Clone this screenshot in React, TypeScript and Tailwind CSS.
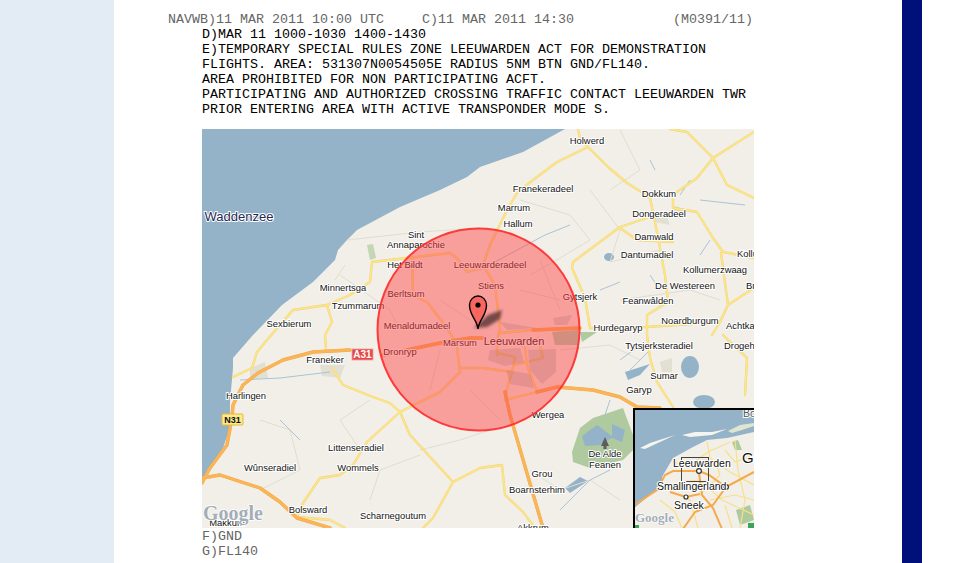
import React from "react";

const notamLines = [
  "D)MAR 11 1000-1030 1400-1430",
  "E)TEMPORARY SPECIAL RULES ZONE LEEUWARDEN ACT FOR DEMONSTRATION",
  "FLIGHTS. AREA: 531307N0054505E RADIUS 5NM BTN GND/FL140.",
  "AREA PROHIBITED FOR NON PARTICIPATING ACFT.",
  "PARTICIPATING AND AUTHORIZED CROSSING TRAFFIC CONTACT LEEUWARDEN TWR",
  "PRIOR ENTERING AREA WITH ACTIVE TRANSPONDER MODE S.",
];

const yellowRoads = [
  "M578 129L580 138L588 147L608 167L627 183L643 193L650 198L657 232L665 275L668 302L647 315L647 335L650 358L657 382L673 407",
  "M677 192L697 178L713 158L754 132",
  "M670 129L687 132L713 158L727 185L754 198",
  "M588 147L557 162L533 180L517 193L508 208L490 245L483 265L495 285L500 328L497 342L497 355",
  "M647 218L620 227L573 262L572 268L585 298L590 328",
  "M620 228L637 240L673 242",
  "M673 198L673 208L697 212L713 238L723 252L754 258",
  "M721 253L728 305L720 322L712 335",
  "M728 305L754 288",
  "M590 328L647 327L720 322",
  "M723 335L747 358L745 395",
  "M407 258L372 262L370 282L350 295L327 305L293 310L273 333L257 352L252 368L233 377",
  "M327 305L332 322L325 335L326 350",
  "M332 368L343 385L373 397L390 403L400 412L410 435L453 482L433 518L423 528",
  "M400 412L367 442L353 465L340 475L320 478L303 503L297 517",
  "M400 412L440 392L460 372L457 348",
  "M453 482L480 468L502 465L505 495L523 512L535 528",
  "M297 517L330 520L345 528",
  "M407 258L450 253L457 258L467 272L483 268",
  "M412 258L413 295L427 302L447 328L457 345",
  "M497 353L515 357L512 372L508 385L505 400",
  "M515 365L543 358L538 338",
  "M460 368L483 368L512 372",
  "M525 348L527 365L537 392L505 400",
  "M500 333L533 330",
];

const orangeRoads = [
  "M202 483L210 468L227 445L232 418L233 405L243 385L258 373L283 360L313 352L350 350",
  "M383 355L440 343L470 338L483 338",
  "M202 478L220 475L260 488L280 502L297 518L330 528",
  "M537 392L557 387L593 390L620 397L637 407L660 408",
  "M505 392L510 415L543 528",
  "M533 330L580 328",
];

const thinRoads = [
  "M347 240L420 232L480 228",
  "M345 265L335 280M340 275L390 310L400 330",
  "M590 190L620 230L610 262L660 250",
  "M520 200L570 215L590 240L560 258L530 275",
  "M260 420L290 430L300 470L260 490",
  "M370 400L340 420L360 450",
  "M420 450L460 440L490 430",
  "M370 500L380 470L420 455",
  "M530 470L560 490L590 480L620 500",
  "M560 350L610 345L640 360",
  "M620 300L690 290L720 300",
  "M610 190L640 170L620 130",
  "M440 300L470 320M520 290L560 300M540 260L560 310",
  "M470 390L500 420M440 350L430 390",
];

const rivers = [
  "M600 290L620 282M650 275L660 290",
  "M480 270L545 235L570 225",
  "M240 380L280 378L330 372",
  "M280 420L300 440",
  "M560 510L590 480L610 470",
  "M610 400L605 415",
  "M620 360L640 345",
  "M650 350L630 370",
  "M680 195L690 180M650 160L655 170",
  "M700 200L745 205M710 240L700 255",
];

type Label = [string, number, number];

const labels: Label[] = [
  ["Holwerd", 587, 144],
  ["Franekeradeel", 543, 192],
  ["Marrum", 514, 211],
  ["Hallum", 518, 227],
  ["Dokkum", 659, 197],
  ["Dongeradeel", 659, 217],
  ["Damwald", 654, 240],
  ["Dantumadiel", 647, 258],
  ["Kollumerzwaag", 715, 273],
  ["De Westereen", 685, 289],
  ["Feanwâlden", 648, 304],
  ["Noardburgum", 690, 324],
  ["Gytsjerk", 580, 300],
  ["Hurdegaryp", 618, 331],
  ["Sint", 416, 238],
  ["Annaparochie", 416, 248],
  ["Het Bildt", 405, 268],
  ["Leeuwarderadeel", 490, 268],
  ["Stiens", 491, 289],
  ["Minnertsga", 343, 291],
  ["Berltsum", 406, 297],
  ["Tzummarum", 358, 309],
  ["Sexbierum", 289, 327],
  ["Menaldumadeel", 417, 329],
  ["Marsum", 460, 346],
  ["Dronryp", 400, 355],
  ["Franeker", 325, 363],
  ["Harlingen", 246, 399],
  ["Littenseradiel", 356, 451],
  ["Wûnseradiel", 270, 471],
  ["Wommels", 358, 471],
  ["Bolsward", 308, 513],
  ["Scharnegoutum", 393, 519],
  ["Makkum", 227, 526],
  ["Tytsjerksteradiel", 659, 349],
  ["Sumar", 664, 379],
  ["Garyp", 639, 393],
  ["Wergea", 548, 418],
  ["De Alde", 605, 457],
  ["Feanen", 605, 468],
  ["Grou", 542, 477],
  ["Boarnsterhim", 537, 493],
  ["Akkrum", 533, 531],
];

function RoadSet({ paths, edge, fill, width }: { paths: string[]; edge: string; fill: string; width: number }) {
  return (
    <g fill="none" strokeLinejoin="round" strokeLinecap="round">
      {paths.map((d, i) => (
        <path key={"e" + i} d={d} stroke={edge} strokeWidth={width + 0.6} />
      ))}
      {paths.map((d, i) => (
        <path key={"f" + i} d={d} stroke={fill} strokeWidth={width} />
      ))}
    </g>
  );
}

function Overview() {
  return (
    <g>
      <rect x="633" y="408" width="121" height="120" fill="#94b3c9" />
      <path d="M634 508L650 495L662 485L662 477L673 458L693 447L707 440L727 438L754 432V528H634Z" fill="#f1efe8" />
      <path d="M682 435L695 432L712 432L727 429L712 435L690 437Z M640 448L650 443L675 435L660 442L645 449Z" fill="#f6f4ee" />
      <path d="M728 431L740 425L754 423V426L742 430L732 433Z" fill="#dfe6cf" />
      <path d="M732 442L738 440L742 450L735 450Z M736 510L750 505L754 520L740 525Z" fill="#aeca9e" />
      <g fill="none" stroke="#f8e08a" strokeWidth="1.2">
        <path d="M707 442L710 458L730 472L754 485M672 462L690 465L708 452L730 442M680 482L700 480L722 500L754 515M668 490L690 500L698 528M735 440L738 470L745 500L740 528M710 500L735 495L754 500M660 500L675 512L682 528M715 460L720 475L700 495M725 505L732 528M754 455L735 462L725 450" />
      </g>
      <g fill="none" stroke="#f5aa4c" strokeWidth="2">
        <path d="M634 505L657 490L665 475L673 471L699 471L709 475L726 487L754 472" />
        <path d="M699 473L702 495L713 508L722 529M726 487L713 505L695 512L683 529M670 492L686 497L700 494" />
      </g>
      <rect x="681.5" y="457.5" width="27" height="24" fill="none" stroke="#444" strokeWidth="1" />
      <g fill="#fff" stroke="#333" strokeWidth="1.2">
        <circle cx="699" cy="471" r="2.4" />
        <circle cx="726" cy="487" r="2.4" />
        <circle cx="686" cy="497" r="2" />
      </g>
      <g
        className="[paint-order:stroke]"
        fontFamily="'Liberation Sans', Arial, sans-serif"
        fontSize="10.5"
        fill="#111"
        stroke="#fff"
        strokeWidth="2"
      >
        <text x="673" y="467">Leeuwarden</text>
        <text x="657" y="490">Smallingerland</text>
        <text x="674" y="509">Sneek</text>
        <text x="742" y="463" fontSize="15">Gr</text>
        <text x="743" y="417" fill="#555">Bo</text>
      </g>
      <text
        x="635"
        y="522"
        className="[paint-order:stroke]"
        fontFamily="'Liberation Serif', serif"
        fontSize="13"
        fontWeight="700"
        fill="#a3adb8"
        stroke="#fff"
        strokeWidth="1"
      >
        Google
      </text>
      <rect x="635" y="525" width="4" height="3" fill="#3aa655" />
      <rect x="748" y="523" width="6" height="5" fill="#3aa655" />
      <path d="M634 529V409H754" fill="none" stroke="#000" strokeWidth="2" />
    </g>
  );
}

function MapPicture() {
  return (
    <svg width="552" height="399" viewBox="202 129 552 399" className="block">
      <rect x="202" y="129" width="552" height="399" fill="#f1efe8" />
      <path
        d="M202 129H565L523 152L480 167L467 177L440 190L400 207L357 230L347 240L338 250L335 260L313 282L282 305L253 335L233 358L233 368L230 402L230 428L223 448L213 462L202 482Z"
        fill="#94b3c9"
      />
      <path d="M367 245L373 244L376 258L370 260Z" fill="#c4d6b4" />
      <path d="M572 452L580 428L593 418L623 408L633 435L633 450L623 460L590 468L573 462Z" fill="#aeca9e" />
      <path d="M582 436L597 425L613 437L600 445L585 446ZM612 424L625 430L622 442L612 438Z" fill="#94b3c9" />
      <path d="M580 332L597 332L582 342Z" fill="#aeca9e" />
      <ellipse cx="690" cy="367" rx="9" ry="11" fill="#94b3c9" />
      <ellipse cx="704" cy="402" rx="11" ry="7" fill="#94b3c9" />
      <path d="M625 372L650 364L640 375L628 380Z" fill="#94b3c9" />
      <path d="M565 488L580 477L588 481L570 493Z" fill="#94b3c9" />
      <ellipse cx="609" cy="257" rx="5" ry="4" fill="#94b3c9" />
      <path d="M650 213L665 212L670 225L655 222Z M672 205L688 210L676 218Z M320 365L345 365L340 378L322 376Z M250 368L265 362L268 378L250 380Z M660 362L672 358L672 372L662 372Z" fill="#e2dfd3" />
      <g fill="none" stroke="#e1ddcf" strokeWidth="1">
        {thinRoads.map((d) => (
          <path key={d} d={d} />
        ))}
      </g>
      <g fill="none" stroke="#a9c3d8" strokeWidth="1">
        {rivers.map((d) => (
          <path key={d} d={d} />
        ))}
      </g>
      <RoadSet paths={yellowRoads} edge="#efd272" fill="#fde587" width={1.7} />
      <RoadSet paths={orangeRoads} edge="#f2a544" fill="#fab557" width={2.8} />

      {/* labels sit under the circle, the overlay tints them */}
      <g
        className="[paint-order:stroke]"
        fontFamily="'Liberation Sans', Arial, sans-serif"
        fontSize="9.4"
        fill="#111"
        stroke="#fff"
        strokeWidth="2"
        strokeLinejoin="round"
        textAnchor="middle"
      >
        {labels.map(([name, x, y]) => (
          <text key={name} x={x} y={y}>
            {name}
          </text>
        ))}
        <text x="737" y="257" textAnchor="start">Kollu</text>
        <text x="746" y="289" textAnchor="start">Br</text>
        <text x="726" y="329" textAnchor="start">Achtka</text>
        <text x="724" y="349" textAnchor="start">Drogeh</text>
        <text x="514" y="345" fontSize="11">Leeuwarden</text>
        <text x="239" y="221" fontSize="13" fill="#1e2a55">Waddenzee</text>
      </g>
      <path d="M601 446L605 437L609 446H606.5V449H603.5V446Z" fill="#5d5d5d" />

      <g fontFamily="'Liberation Sans', Arial, sans-serif" fontSize="10" fontWeight="700" textAnchor="middle">
        <rect x="352" y="349" width="21" height="11" fill="#e8474a" stroke="#f5a0a0" strokeWidth="0.8" />
        <text x="362.5" y="358" fill="#fff">A31</text>
        <rect x="222" y="414" width="21" height="11" rx="1" fill="#fbe98a" stroke="#e5b93b" strokeWidth="1" />
        <text x="232.5" y="423" fill="#111" fontSize="9">N31</text>
      </g>

      <text
        x="203"
        y="520"
        className="[paint-order:stroke]"
        fontFamily="'Liberation Serif', serif"
        fontSize="20"
        fontWeight="700"
        fill="#a3adb8"
        stroke="#fff"
        strokeWidth="1.5"
      >
        Google
      </text>

      {/* restricted zone */}
      <circle cx="478.5" cy="329.5" r="101" fill="#ff4545" fillOpacity="0.47" stroke="#ff2a2a" strokeOpacity="0.9" strokeWidth="2" />
      <path
        d="M490 350L520 348L524 362L505 366L488 360Z M528 350L556 349L556 372L542 384L530 370Z M506 370L530 374L534 388L510 384Z M500 322L537 328L507 330Z M553 318L572 315L567 325L555 325Z"
        fill="#80505a"
        fillOpacity="0.16"
      />
      <path d="M552 332L578 330L578 345L555 345Z" fill="#7a6a40" fillOpacity="0.3" />

      {/* marker */}
      <path d="M474 328L488 315L502 310L500 319L487 327Z" fill="#4a2c2c" fillOpacity="0.75" className="blur-[1.5px]" />
      <path
        d="M478 329C477 319 469.5 316 469.5 305C469.5 300 473.5 296 478 296C482.5 296 486.5 300 486.5 305C486.5 316 479 319 478 329Z"
        fill="#f8665f"
        stroke="#000"
        strokeWidth="1.4"
      />
      <circle cx="478" cy="305" r="2.6" fill="#000" />

      <Overview />
    </svg>
  );
}

export default function App() {
  return (
    <div className="flex h-[563px] overflow-hidden bg-white font-['Liberation_Mono',monospace] text-[13.33px] leading-[15px]">
      <div className="w-[114px] shrink-0 bg-[#e3ebf5]" />
      <main className="w-[788px] shrink-0 pt-[12px] whitespace-pre">
        <div className="flex pl-[54px] text-[#666]">
          <span>NAVWB)11 MAR 2011 10:00 UTC</span>
          <span className="ml-[38px]">C)11 MAR 2011 14:30</span>
          <span className="ml-[99px]">(M0391/11)</span>
        </div>
        <div className="pl-[88px] text-black">
          {notamLines.map((line) => (
            <div key={line}>{line}</div>
          ))}
        </div>
        <div className="mt-[12px] pl-[88px]">
          <MapPicture />
        </div>
        <div className="pl-[88px] pt-[1px] text-[#666]">
          <div>F)GND</div>
          <div>G)FL140</div>
        </div>
      </main>
      <div className="w-[20px] shrink-0 bg-[#00107a]" />
    </div>
  );
}
